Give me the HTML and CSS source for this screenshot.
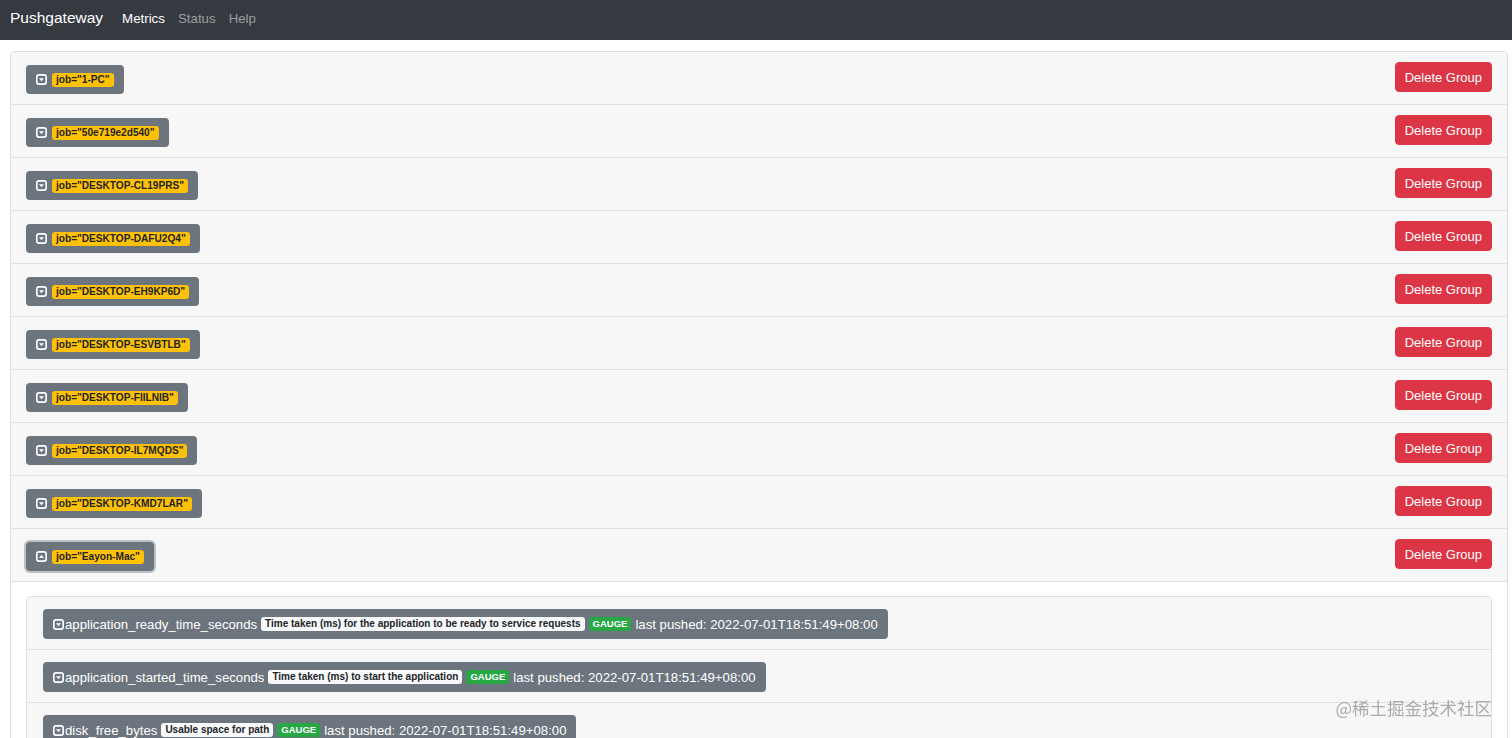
FILE: index.html
```html
<!DOCTYPE html>
<html lang="en">
<head>
    <meta charset="UTF-8">
    <meta name="viewport" content="width=device-width, initial-scale=1.0">
    <title>Pushgateway</title>
    <link rel="stylesheet" href="styles.css">
</head>
<body>
    <nav class="navbar">
        <a class="brand" href="#">Pushgateway</a>
        <a class="nav-link active" href="#">Metrics</a>
        <a class="nav-link" href="#">Status</a>
        <a class="nav-link" href="#">Help</a>
    </nav>

    <div class="main">
        <div class="groups">
            <div class="group-header">
                <span class="job-btn"><svg class="toggle" viewBox="0 0 16 16"><rect x="1.2" y="1.2" width="13.6" height="13.6" rx="3.2"/><polygon points="4.4,6 11.6,6 8,10.6"/></svg><span class="badge badge-job">job="1-PC"</span></span>
                <button class="btn-delete">Delete Group</button>
            </div>
            <div class="group-header">
                <span class="job-btn"><svg class="toggle" viewBox="0 0 16 16"><rect x="1.2" y="1.2" width="13.6" height="13.6" rx="3.2"/><polygon points="4.4,6 11.6,6 8,10.6"/></svg><span class="badge badge-job">job="50e719e2d540"</span></span>
                <button class="btn-delete">Delete Group</button>
            </div>
            <div class="group-header">
                <span class="job-btn"><svg class="toggle" viewBox="0 0 16 16"><rect x="1.2" y="1.2" width="13.6" height="13.6" rx="3.2"/><polygon points="4.4,6 11.6,6 8,10.6"/></svg><span class="badge badge-job">job="DESKTOP-CL19PRS"</span></span>
                <button class="btn-delete">Delete Group</button>
            </div>
            <div class="group-header">
                <span class="job-btn"><svg class="toggle" viewBox="0 0 16 16"><rect x="1.2" y="1.2" width="13.6" height="13.6" rx="3.2"/><polygon points="4.4,6 11.6,6 8,10.6"/></svg><span class="badge badge-job">job="DESKTOP-DAFU2Q4"</span></span>
                <button class="btn-delete">Delete Group</button>
            </div>
            <div class="group-header">
                <span class="job-btn"><svg class="toggle" viewBox="0 0 16 16"><rect x="1.2" y="1.2" width="13.6" height="13.6" rx="3.2"/><polygon points="4.4,6 11.6,6 8,10.6"/></svg><span class="badge badge-job">job="DESKTOP-EH9KP6D"</span></span>
                <button class="btn-delete">Delete Group</button>
            </div>
            <div class="group-header">
                <span class="job-btn"><svg class="toggle" viewBox="0 0 16 16"><rect x="1.2" y="1.2" width="13.6" height="13.6" rx="3.2"/><polygon points="4.4,6 11.6,6 8,10.6"/></svg><span class="badge badge-job">job="DESKTOP-ESVBTLB"</span></span>
                <button class="btn-delete">Delete Group</button>
            </div>
            <div class="group-header">
                <span class="job-btn"><svg class="toggle" viewBox="0 0 16 16"><rect x="1.2" y="1.2" width="13.6" height="13.6" rx="3.2"/><polygon points="4.4,6 11.6,6 8,10.6"/></svg><span class="badge badge-job">job="DESKTOP-FIILNIB"</span></span>
                <button class="btn-delete">Delete Group</button>
            </div>
            <div class="group-header">
                <span class="job-btn"><svg class="toggle" viewBox="0 0 16 16"><rect x="1.2" y="1.2" width="13.6" height="13.6" rx="3.2"/><polygon points="4.4,6 11.6,6 8,10.6"/></svg><span class="badge badge-job">job="DESKTOP-IL7MQDS"</span></span>
                <button class="btn-delete">Delete Group</button>
            </div>
            <div class="group-header">
                <span class="job-btn"><svg class="toggle" viewBox="0 0 16 16"><rect x="1.2" y="1.2" width="13.6" height="13.6" rx="3.2"/><polygon points="4.4,6 11.6,6 8,10.6"/></svg><span class="badge badge-job">job="DESKTOP-KMD7LAR"</span></span>
                <button class="btn-delete">Delete Group</button>
            </div>
            <div class="group-header">
                <span class="job-btn open"><svg class="toggle" viewBox="0 0 16 16"><rect x="1.2" y="1.2" width="13.6" height="13.6" rx="3.2"/><polygon points="4.4,10.2 11.6,10.2 8,5.6"/></svg><span class="badge badge-job">job="Eayon-Mac"</span></span>
                <button class="btn-delete">Delete Group</button>
            </div>

            <!-- expanded group -->
            <div class="group-body">
                <div class="metrics">
                    <div class="metric-header">
                        <span class="metric-btn"><svg class="toggle small" viewBox="0 0 16 16"><rect x="1.2" y="1.2" width="13.6" height="13.6" rx="3.2"/><polygon points="4.4,6 11.6,6 8,10.6"/></svg>application_ready_time_seconds<span class="badge badge-help">Time taken (ms) for the application to be ready to service requests</span><span class="badge badge-type">GAUGE</span>last pushed: 2022-07-01T18:51:49+08:00</span>
                    </div>
                    <div class="metric-header">
                        <span class="metric-btn"><svg class="toggle small" viewBox="0 0 16 16"><rect x="1.2" y="1.2" width="13.6" height="13.6" rx="3.2"/><polygon points="4.4,6 11.6,6 8,10.6"/></svg>application_started_time_seconds<span class="badge badge-help">Time taken (ms) to start the application</span><span class="badge badge-type">GAUGE</span>last pushed: 2022-07-01T18:51:49+08:00</span>
                    </div>
                    <div class="metric-header">
                        <span class="metric-btn"><svg class="toggle small" viewBox="0 0 16 16"><rect x="1.2" y="1.2" width="13.6" height="13.6" rx="3.2"/><polygon points="4.4,6 11.6,6 8,10.6"/></svg>disk_free_bytes<span class="badge badge-help">Usable space for path</span><span class="badge badge-type">GAUGE</span>last pushed: 2022-07-01T18:51:49+08:00</span>
                    </div>
                    <div class="metric-header">
                        <span class="metric-btn"><svg class="toggle small" viewBox="0 0 16 16"><rect x="1.2" y="1.2" width="13.6" height="13.6" rx="3.2"/><polygon points="4.4,6 11.6,6 8,10.6"/></svg>disk_total_bytes<span class="badge badge-help">Total space for path</span><span class="badge badge-type">GAUGE</span>last pushed: 2022-07-01T18:51:49+08:00</span>
                    </div>
                </div>
            </div>
        </div>
    </div>

    <div class="watermark">@稀土掘金技术社区</div>
</body>
</html>
```

FILE: styles.css
```css
body {
    margin: 0;
    font-family: "Liberation Sans", Arial, sans-serif;
    font-size: 13px;
    color: #212529;
    background-color: #fff;
}
.navbar {
    display: flex;
    align-items: center;
    box-sizing: border-box;
    height: 40px;
    padding: 0 10px 4px;
    background-color: #343a40;
}
.brand {
    color: #fff;
    font-size: 15.5px;
    text-decoration: none;
    margin-right: 19px;
}
.nav-link {
    color: rgba(255, 255, 255, 0.5);
    font-size: 13.3px;
    text-decoration: none;
    margin-right: 13px;
}
.nav-link.active {
    color: #fff;
}
.main {
    padding: 11px 4px 0 10px;
}
.groups {
    border: 1px solid #dfdfdf;
    border-radius: 4px;
    overflow: hidden;
}
.group-header {
    display: flex;
    justify-content: space-between;
    align-items: flex-start;
    padding: 10px 15px 10px;
    background-color: #f7f7f7;
    border-bottom: 1px solid #dfdfdf;
}
.job-btn {
    display: inline-flex;
    align-items: center;
    box-sizing: border-box;
    height: 29px;
    margin-top: 3px;
    padding: 0 10px;
    background-color: #6c757d;
    border-radius: 4px;
}
.job-btn.open {
    box-shadow: 0 0 0 2px rgba(150, 158, 165, 0.6);
}
.toggle {
    width: 11px;
    height: 11px;
    margin-right: 5px;
    flex-shrink: 0;
}
.toggle rect {
    fill: none;
    stroke: #fff;
    stroke-width: 2.4;
}
.toggle polygon {
    fill: #fff;
}
.toggle.small {
    margin-right: 1px;
}
.badge {
    display: inline-block;
    font-size: 10px;
    font-weight: bold;
    line-height: 10px;
    padding: 2px 4px;
    border-radius: 3px;
    white-space: nowrap;
}
.badge-job {
    font-size: 10.1px;
    background-color: #ffc107;
    color: #212529;
}
.badge-help {
    background-color: #f8f9fa;
    color: #212529;
    margin: 0 4px;
}
.badge-type {
    font-size: 9.5px;
    background-color: #28a745;
    color: #fff;
    margin-right: 4px;
}
.btn-delete {
    height: 30px;
    padding: 0 9px;
    font-family: "Liberation Sans", Arial, sans-serif;
    font-size: 13px;
    color: #fff;
    background-color: #dc3545;
    border: 1px solid #dc3545;
    border-radius: 4px;
    cursor: pointer;
}
.group-body {
    padding: 14px 15px 15px;
    background-color: #fff;
}
.metrics {
    border: 1px solid #dfdfdf;
    border-radius: 4px;
    overflow: hidden;
}
.metric-header {
    padding: 12px 16px 10px;
    background-color: #f7f7f7;
    border-bottom: 1px solid #dfdfdf;
}
.metric-btn {
    display: inline-flex;
    align-items: center;
    height: 30px;
    padding: 0 10px;
    font-size: 13.2px;
    color: #fff;
    background-color: #6c757d;
    border-radius: 4px;
    white-space: nowrap;
}
.watermark {
    position: fixed;
    right: 20px;
    bottom: 18px;
    font-family: "Noto Sans CJK SC", sans-serif;
    font-size: 17.5px;
    color: rgba(110, 110, 110, 0.55);
}
```
